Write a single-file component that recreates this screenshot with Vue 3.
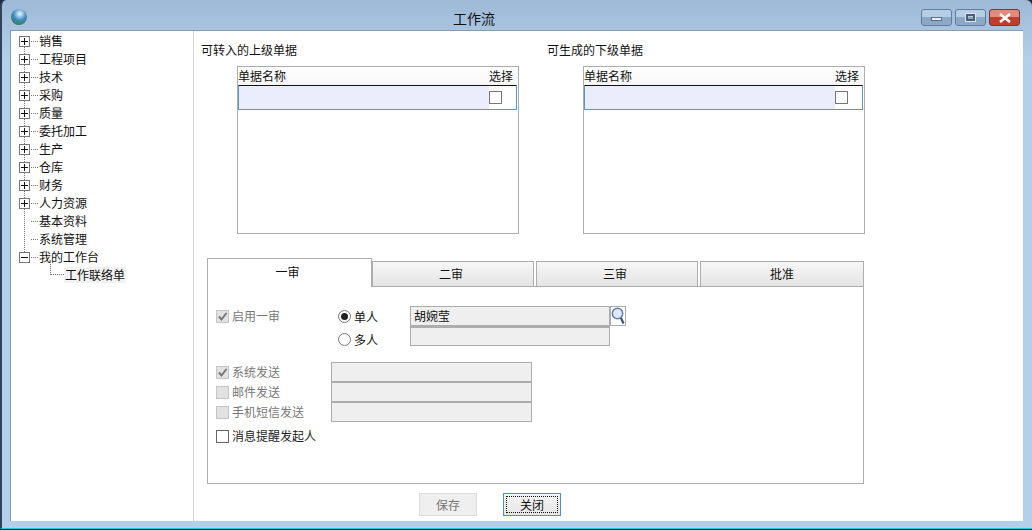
<script setup>
const tree = [
  { t: '销售', k: 'p' }, { t: '工程项目', k: 'p' }, { t: '技术', k: 'p' }, { t: '采购', k: 'p' },
  { t: '质量', k: 'p' }, { t: '委托加工', k: 'p' }, { t: '生产', k: 'p' }, { t: '仓库', k: 'p' },
  { t: '财务', k: 'p' }, { t: '人力资源', k: 'p' }, { t: '基本资料', k: 'l' }, { t: '系统管理', k: 'l' },
  { t: '我的工作台', k: 'm' }
]
const lists = [
  { title: '可转入的上级单据' },
  { title: '可生成的下级单据' }
]
const tabs = ['二审', '三审', '批准']
const sends = [
  { t: '系统发送', on: true },
  { t: '邮件发送', on: false },
  { t: '手机短信发送', on: false }
]
</script>

<template>
  <div class="win">
    <header class="title">
      <span class="orb"></span>
      <span class="title-text">工作流</span>
      <div class="ctl">
        <span class="cb min"><i></i></span>
        <span class="cb max"><i></i></span>
        <span class="cb close">
          <svg width="14" height="10" viewBox="0 0 14 10"><path d="M2 1 L12 9 M12 1 L2 9" stroke="#fff" stroke-width="2.6" /></svg>
        </span>
      </div>
    </header>
    <div class="client">
      <nav class="tree">
        <div class="vline"></div>
        <div v-for="n in tree" :key="n.t" class="row">
          <span v-if="n.k !== 'l'" class="exp">
            <i class="h"></i><i v-if="n.k === 'p'" class="v"></i>
          </span>
          <span v-else class="exp-none"></span>
          <span class="dots"></span>
          <span class="label">{{ n.t }}</span>
        </div>
        <div class="row child">
          <span class="elbow"></span>
          <span class="label sel">工作联络单</span>
        </div>
      </nav>
      <main class="main">
        <section class="lists">
          <div v-for="l in lists" :key="l.title" class="group">
            <div class="group-title">{{ l.title }}</div>
            <div class="grid">
              <div class="grid-head"><span>单据名称</span><span>选择</span></div>
              <div class="grid-row"><span class="box"></span></div>
            </div>
          </div>
        </section>
        <section class="tabs">
          <div class="tab-head">
            <div class="tab active">一审</div>
            <div v-for="t in tabs" :key="t" class="tab">{{ t }}</div>
          </div>
          <div class="pane">
            <div class="top-form">
              <label class="chk dim"><span class="cbx off"><svg width="11" height="11" viewBox="0 0 11 11"><path d="M2 5.5 L4.5 8.5 L9.5 2" fill="none" stroke="#777" stroke-width="2" /></svg></span>启用一审</label>
              <div class="radios">
                <label class="rad"><span class="rb on"></span>单人</label>
                <label class="rad"><span class="rb"></span>多人</label>
              </div>
              <div class="pick">
                <div class="pick-row">
                  <div class="field name">胡婉莹</div>
                  <span class="search">
                    <svg width="14" height="18" viewBox="0 0 14 18">
                      <circle cx="6.5" cy="6.5" r="5.2" fill="#dfe8f6" stroke="#5d7fa8" stroke-width="1.5" />
                      <path d="M10 11 L12.5 16.5" stroke="#3f4f66" stroke-width="2.2" />
                    </svg>
                  </span>
                </div>
                <div class="field second"></div>
              </div>
            </div>
            <div class="send">
              <div class="send-labels">
                <label v-for="s in sends" :key="s.t" class="chk dim line20">
                  <span class="cbx off">
                    <svg v-if="s.on" width="11" height="11" viewBox="0 0 11 11"><path d="M2 5.5 L4.5 8.5 L9.5 2" fill="none" stroke="#777" stroke-width="2" /></svg>
                  </span>{{ s.t }}
                </label>
              </div>
              <div class="send-fields">
                <div v-for="s in sends" :key="s.t" class="field wide"></div>
              </div>
            </div>
            <label class="chk notify"><span class="cbx"></span>消息提醒发起人</label>
          </div>
        </section>
        <footer class="actions">
          <button class="btn save" disabled>保存</button>
          <button class="btn closeb"><span>关闭</span></button>
        </footer>
      </main>
    </div>
  </div>
</template>

<style>
html, body { margin: 0; padding: 0; background: #1d2a3a; overflow: hidden; }
</style>

<style scoped>
* { box-sizing: border-box; }
.win {
  width: 1032px; height: 529px; display: flex; flex-direction: column;
  background: linear-gradient(#9db9d6, #b4cfe9 60px);
  border-left: 2px solid #34415a; border-bottom: 1px solid #25c8e0;
  padding: 0 9px 7px 8px;
  font: 12px/1 "Noto Sans CJK SC", sans-serif; color: #111;
  border-top-left-radius: 6px; border-top-right-radius: 6px;
}
.title { height: 30px; flex: none; display: flex; align-items: flex-start; position: relative; }
.orb {
  width: 16px; height: 16px; border-radius: 50%; margin: 9px 0 0 1px;
  background: radial-gradient(circle at 55% 30%, #d7eef9 5%, #3f8bc5 45%, #2e7a3a 85%, #1f4f30);
}
.title-text { position: absolute; left: 443px; top: 9px; font-size: 14px; line-height: 18px; color: #111; }
.ctl { margin-left: auto; margin-right: 3px; margin-top: 9px; display: flex; gap: 3px; }
.cb {
  width: 31px; height: 17px; border: 1px solid #5f7e9f; border-radius: 3px;
  background: linear-gradient(#b7cde3 0 50%, #8ba8c6 50% 100%);
  display: flex; align-items: center; justify-content: center;
}
.cb.close { width: 31px; border-color: #6e3b36; background: linear-gradient(#e38a7c 0 45%, #bf3f2e 45% 100%); }
.min { align-items: center; }
.min i { width: 11px; height: 4px; background: #e8edf2; border: 1px solid #5a6f86; margin-top: 2px; }
.max i { width: 9px; height: 7px; background: transparent; border: 2px solid #4a5d73; outline: 1px solid #dde6ef; }
.client { flex: 1; min-height: 0; display: flex; background: #fff; border-top: 1px solid #8b99a8; border-left: 1px solid #8b99a8; }
.tree { width: 183px; flex: none; border-right: 1px solid #d4d4d4; padding-top: 1px; position: relative; }
.vline { position: absolute; left: 13px; top: 10px; height: 217px; border-left: 1px dotted #777; }
.row { height: 18px; display: flex; align-items: center; padding-left: 8px; position: relative; }
.exp { width: 11px; height: 11px; border: 1px solid #777; background: #fff; position: relative; flex: none; }
.exp .h { position: absolute; left: 1px; right: 1px; top: 4px; height: 1px; background: #111; }
.exp .v { position: absolute; top: 1px; bottom: 1px; left: 4px; width: 1px; background: #111; }
.exp-none { width: 11px; flex: none; }
.dots { width: 7px; margin-left: 1px; border-top: 1px dotted #777; flex: none; }
.label { padding: 0 1px; line-height: 16px; color: #111; white-space: nowrap; }
.child { padding-left: 39px; }
.elbow { width: 14px; height: 13px; margin-top: -13px; border-left: 1px dotted #777; border-bottom: 1px dotted #777; flex: none; }
.sel { background: #f2f2f2; }
.main { flex: 1; min-width: 0; display: flex; flex-direction: column; padding-left: 7px; }
.lists { display: flex; height: 227px; }
.group { width: 346px; flex: none; padding-top: 11px; }
.group-title { line-height: 16px; }
.grid { margin: 8px 0 0 36px; width: 282px; height: 168px; border: 1px solid #adadad; padding: 0 1px; }
.grid-head { display: flex; justify-content: space-between; height: 18px; line-height: 17px; padding-right: 5px; background: linear-gradient(#fff, #f6f6f6); margin: 0 -1px; }
.grid-row { height: 25px; border: 1px solid #5a97c8; border-top-color: #111; border-radius: 1px; background: linear-gradient(90deg, #ebedfc 0 250px, #fff 250px); display: flex; align-items: center; justify-content: flex-end; padding-right: 14px; margin-left: -1px; }
.box { width: 13px; height: 13px; border: 1px solid #777; background: #fff; }
.tabs { width: 657px; margin-left: 6px; }
.tab-head { display: flex; height: 29px; align-items: flex-end; }
.tab { width: 162px; height: 26px; margin-right: 2px; padding-right: 4px; border: 1px solid #adadad; background: linear-gradient(#f7f7f7, #e4e4e4); display: flex; align-items: center; justify-content: center; font-size: 12px; border-bottom-color: #9a9a9a; }
.tab:last-child { width: 164px; margin-right: 0; padding-right: 0; }
.tab.active { width: 165px; height: 29px; background: #fff; border-bottom: 0; margin-right: 0; position: relative; z-index: 1; padding-bottom: 2px; }
.pane { height: 198px; margin-top: -1px; border: 1px solid #adadad; padding: 19px 0 0 8px; position: relative; background: #fff; }
.top-form { display: flex; align-items: flex-start; height: 56px; }
.chk { display: flex; align-items: center; gap: 3px; line-height: 16px; }
.dim { color: #777; }
.top-form > .chk { width: 122px; margin-top: 2px; }
.cbx { width: 13px; height: 13px; border: 1px solid #666; background: #fff; display: flex; align-items: center; justify-content: center; flex: none; }
.cbx.off { border-color: #c4c4c4; background: #e2e2e2; }
.radios { width: 72px; display: flex; flex-direction: column; gap: 6px; margin-top: 2px; }
.rad { display: flex; align-items: center; gap: 3px; height: 17px; line-height: 16px; }
.rb { width: 13px; height: 13px; border-radius: 50%; border: 1px solid #777; background: #fff; display: flex; align-items: center; justify-content: center; }
.rb.on::after { content: ''; width: 7px; height: 7px; border-radius: 50%; background: #222; }
.pick { width: 216px; }
.pick-row { display: flex; }
.field { height: 20px; border: 1px solid #adadad; background: #efefef; width: 200px; }
.field.name { line-height: 18px; padding-left: 3px; border-bottom-width: 2px; height: 21px; }
.field.second { height: 19px; }
.search { width: 16px; height: 20px; border: 1px solid #adadad; background: #fff; display: flex; align-items: center; justify-content: center; }
.send { display: flex; }
.send-labels { width: 115px; display: flex; flex-direction: column; }
.line20 { height: 20px; }
.send-fields { width: 201px; display: flex; flex-direction: column; }
.field.wide { width: 201px; height: 20px; }
.notify { margin-top: 4px; height: 20px; color: #222; }
.actions { display: flex; margin-top: 9px; margin-left: 218px; gap: 26px; }
.btn { width: 58px; height: 23px; padding: 0; font: inherit; }
.save { border: 1px solid #dcdcdc; background: #efefef; color: #777; }
.closeb { border: 1px solid #4f8ecb; background: linear-gradient(#f4f4f4, #e6e6e6); color: #111; padding: 2px; }
.closeb span { display: flex; align-items: center; justify-content: center; width: 100%; height: 100%; border: 1px dotted #111; }
</style>
